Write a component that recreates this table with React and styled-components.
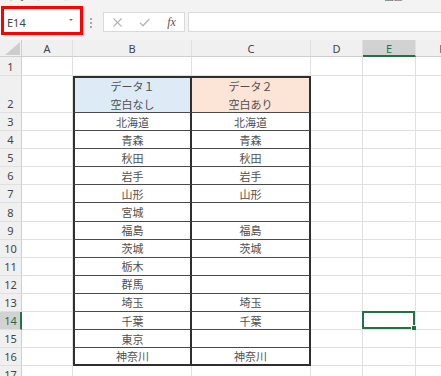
import React from 'react';
import styled, { createGlobalStyle, css } from 'styled-components';

const GRID = '#e0e0e0';
const INK = '#2f2f2f';
const LINE = '#4a4a4a';
const GREEN = '#217346';
const HEAD_BG = '#f0f0f0';
const HEAD_LINE = '#cfcfcf';

const GlobalStyle = createGlobalStyle`
  html, body { margin: 0; padding: 0; background: #fff; overflow: hidden; }
  body { font-family: "Noto Sans CJK JP", "Noto Sans", sans-serif; }
`;

const Screen = styled.div`
  width: 441px;
  height: 376px;
  overflow: hidden;
  background: #fff;
  display: flex;
  flex-direction: column;
`;

const Top = styled.div`
  height: 40px;
  flex: none;
  background: #f3f3f3;
  display: flex;
  flex-direction: column;
`;

const Ribbon = styled.div`
  height: 4px;
  overflow: hidden;
  display: flex;
  align-items: flex-start;
`;

const RibbonLabel = styled.span`
  margin-left: ${p => p.$ml}px;
  margin-top: -9px;
  font-size: 9px;
  line-height: 11px;
  color: #555;
  white-space: nowrap;
`;

const FormulaBar = styled.div`
  height: 36px;
  display: flex;
  align-items: flex-start;
  padding-left: 1px;
`;

const NameBox = styled.div`
  box-sizing: border-box;
  margin-top: 2px;
  width: 82px;
  height: 29px;
  border: 3px solid #ff0000;
  background: #fff;
  display: flex;
  align-items: center;
  justify-content: space-between;
  padding: 3px 7px 0 3px;
  font-family: "Noto Sans", "Liberation Sans", sans-serif;
  font-size: 11px;
  color: #444;
`;

const DropArrow = styled.span`
  width: 0;
  height: 0;
  margin-top: -4px;
  border-left: 2px solid transparent;
  border-right: 2px solid transparent;
  border-top: 2px solid #777;
`;

const Grip = styled.div`
  margin: 14px 0 0 7px;
  display: flex;
  flex-direction: column;
  gap: 2px;
  span { width: 2px; height: 2px; background: #a8a8a8; }
`;

const IconBox = styled.div`
  box-sizing: border-box;
  margin: 8px 0 0 11px;
  width: 82px;
  height: 20px;
  border: 1px solid #d9d9d9;
  background: #fff;
  display: grid;
  grid-template-columns: repeat(3, 27px);
  align-items: center;
  justify-items: center;
`;

const Fx = styled.span`
  font-family: "Liberation Serif", "DejaVu Serif", serif;
  font-style: italic;
  font-size: 12px;
  color: #555;
  line-height: 1;
`;

const FormulaInput = styled.div`
  box-sizing: border-box;
  margin: 8px -10px 0 3px;
  flex: 1;
  height: 20px;
  border: 1px solid #d9d9d9;
  background: #fff;
`;

const Sheet = styled.div`
  display: grid;
  grid-template-columns: 22px 51px 119px 119px 52px 53px 53px;
  grid-template-rows: 17px 19px 37px repeat(14, 18.1px) 18.1px;
  font-family: "Noto Sans CJK JP", "Noto Sans", sans-serif;
`;

const Corner = styled.div`
  box-sizing: border-box;
  background: ${HEAD_BG};
  border-right: 1px solid ${HEAD_LINE};
  border-bottom: 1px solid ${HEAD_LINE};
  display: flex;
  align-items: flex-end;
  justify-content: flex-end;
  padding: 0 1px 1px 0;
`;

const CornerMark = styled.span`
  width: 0;
  height: 0;
  border-left: 15px solid transparent;
  border-bottom: 13px solid #cdcdcd;
`;

const ColHeader = styled.div`
  box-sizing: border-box;
  background: ${HEAD_BG};
  border-right: 1px solid ${GRID};
  border-bottom: 1px solid ${HEAD_LINE};
  display: flex;
  align-items: center;
  justify-content: center;
  font-family: "Noto Sans", "Liberation Sans", sans-serif;
  font-size: 11px;
  color: #444;
  padding-top: 1px;
  ${p => p.$active && css`
    background: #d2d2d2;
    color: ${GREEN};
    border-bottom: 2px solid ${GREEN};
    padding-top: 2px;
  `}
`;

const RowHeader = styled.div`
  box-sizing: border-box;
  background: ${HEAD_BG};
  border-right: 1px solid ${HEAD_LINE};
  border-bottom: 1px solid ${GRID};
  display: flex;
  align-items: flex-end;
  justify-content: center;
  font-family: "Noto Sans", "Liberation Sans", sans-serif;
  font-size: 11px;
  line-height: 17px;
  color: #444;
  ${p => p.$active && css`
    background: #d2d2d2;
    color: ${GREEN};
    border-right: 2px solid ${GREEN};
    padding-left: 1px;
  `}
`;

const Cell = styled.div`
  box-sizing: border-box;
  position: relative;
  background: ${p => p.$fill || '#fff'};
  border-right: 1px solid ${GRID};
  border-bottom: 1px solid ${GRID};
  display: flex;
  align-items: center;
  justify-content: center;
  text-align: center;
  white-space: pre-line;
  font-size: 11px;
  line-height: 18px;
  color: #4f4f4f;
  ${p => p.$table && css`
    border-right: 2px solid ${INK};
    border-bottom: ${p.$last ? `2px solid ${INK}` : `1px solid ${LINE}`};
  `}
  ${p => p.$table && p.$first && css`border-top: 2px solid ${INK};`}
  ${p => p.$table && p.$col === 'B' && css`border-left: 2px solid ${INK};`}
`;

const Selection = styled.div`
  position: absolute;
  top: -1px;
  left: -1px;
  right: 0;
  bottom: 0;
  border: 2px solid ${GREEN};
`;

const FillHandle = styled.span`
  position: absolute;
  right: -4px;
  bottom: -4px;
  width: 4px;
  height: 4px;
  background: ${GREEN};
  border: 1px solid #fff;
`;

const COLS = ['A', 'B', 'C', 'D', 'E', 'F'];

const B_DATA = ['北海道', '青森', '秋田', '岩手', '山形', '宮城', '福島', '茨城', '栃木', '群馬', '埼玉', '千葉', '東京', '神奈川'];
const C_DATA = ['北海道', '青森', '秋田', '岩手', '山形', '', '福島', '茨城', '', '', '埼玉', '千葉', '', '神奈川'];

const ROWS = Array.from({ length: 17 }, (_, i) => i + 1);

function cellProps(row, col) {
  const inTable = (col === 'B' || col === 'C') && row >= 2 && row <= 16;
  const props = { $table: inTable, $col: col, $first: row === 2, $last: row === 16 };
  if (row === 2 && col === 'B') return { ...props, $fill: '#ddebf7', text: 'データ１\n空白なし' };
  if (row === 2 && col === 'C') return { ...props, $fill: '#fce4d6', text: 'データ２\n空白あり' };
  if (row >= 3 && row <= 16) {
    if (col === 'B') return { ...props, text: B_DATA[row - 3] };
    if (col === 'C') return { ...props, text: C_DATA[row - 3] };
  }
  return { ...props, text: '' };
}

function Toolbar() {
  return (
    <Top>
      <Ribbon>
        <RibbonLabel $ml={8}>フォント</RibbonLabel>
        <RibbonLabel $ml={20}>ｽ</RibbonLabel>
        <RibbonLabel $ml={316}>配置</RibbonLabel>
      </Ribbon>
      <FormulaBar>
        <NameBox>
          E14
          <DropArrow />
        </NameBox>
        <Grip><span /><span /><span /></Grip>
        <IconBox>
          <svg width="9" height="9" viewBox="0 0 9 9">
            <path d="M0.5 0.5 L8.5 8.5 M8.5 0.5 L0.5 8.5" stroke="#b4b4b4" strokeWidth="1.1" fill="none" />
          </svg>
          <svg width="11" height="9" viewBox="0 0 11 9">
            <path d="M0.8 4.6 L4 7.8 L10.3 1" stroke="#b4b4b4" strokeWidth="1.3" fill="none" />
          </svg>
          <Fx>fx</Fx>
        </IconBox>
        <FormulaInput />
      </FormulaBar>
    </Top>
  );
}

export default function App() {
  return (
    <>
      <GlobalStyle />
      <Screen>
        <Toolbar />
        <Sheet>
          <Corner><CornerMark /></Corner>
          {COLS.map(c => (
            <ColHeader key={c} $active={c === 'E'}>{c}</ColHeader>
          ))}
          {ROWS.map(r => (
            <React.Fragment key={r}>
              <RowHeader $active={r === 14}>{r}</RowHeader>
              {COLS.map(c => {
                const { text, ...p } = cellProps(r, c);
                const selected = r === 14 && c === 'E';
                return (
                  <Cell key={c} {...p}>
                    {text}
                    {selected && (
                      <Selection>
                        <FillHandle />
                      </Selection>
                    )}
                  </Cell>
                );
              })}
            </React.Fragment>
          ))}
        </Sheet>
      </Screen>
    </>
  );
}
